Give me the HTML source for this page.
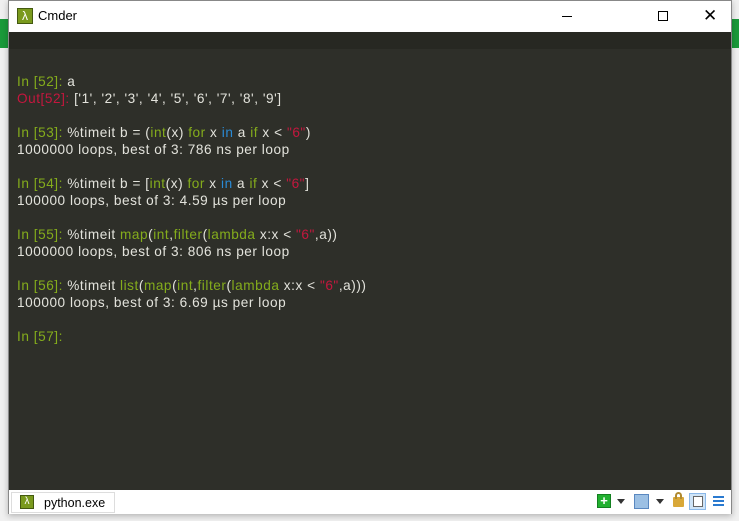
<!DOCTYPE html>
<html><head><meta charset="utf-8"><style>
*{margin:0;padding:0;box-sizing:border-box}
body{width:739px;height:521px;background:#f0f0f0;position:relative;overflow:hidden;font-family:"Liberation Sans","Noto Sans CJK SC",sans-serif}
.bgg{position:absolute;left:0;top:19px;width:8px;height:29px;background:#1a9a3a}
.bgg2{position:absolute;left:731px;top:19px;width:8px;height:29px;background:#1a9a3a}
.win{position:absolute;left:8px;top:0;width:724px;height:514px;background:#fff;border:1px solid #888;box-shadow:0 2px 6px rgba(0,0,0,.25)}
.title{position:absolute;left:0;top:0;width:722px;height:31px;background:#fff}
.logo{position:absolute;left:8px;top:7px;width:16px;height:16px;background:#7a9a1e;border:1px solid #445a10;color:#fff;font-size:12px;line-height:14px;text-align:center}
.tt{position:absolute;left:29px;top:7px;font-size:13px;color:#000}
.con{position:absolute;left:0;top:31px;width:722px;height:458px;background:#2e2f29}
.band{position:absolute;left:0;top:0;width:722px;height:17px;background:#272822}
.l{position:absolute;left:8px;font-size:13.6px;letter-spacing:0.55px;color:#e3e3dc;white-space:pre}
.g{color:#84ac1c}.r{color:#c4173e}.b{color:#2a8bd6}
.sb{position:absolute;left:0;top:489px;width:722px;height:24px;background:#fff}
.tab{position:absolute;left:2px;top:2px;width:104px;height:21px;border:1px solid #ddd;background:#fff}
.tab .logo{left:8px;top:2px;width:14px;height:14px;font-size:10px;line-height:12px}
.tab span{position:absolute;left:32px;top:3px;font-size:12.5px}
</style></head><body>
<div class="bgg"></div><div class="bgg2"></div>
<div class="win">
<div class="title"><div class="logo">λ</div><div class="tt">Cmder</div>
<div style="position:absolute;left:553px;top:15px;width:10px;height:1px;background:#000"></div>
<div style="position:absolute;left:649px;top:10px;width:10px;height:10px;border:1px solid #000"></div>
<div style="position:absolute;left:694px;top:6px;font-size:17px;color:#000;line-height:17px">✕</div>
</div>
<div class="con"><div class="band"></div>
<div class="l" style="top:42px"><span class="g">In [52]: </span>a</div>
<div class="l" style="top:59px"><span class="r">Out[52]: </span>['1', '2', '3', '4', '5', '6', '7', '8', '9']</div>
<div class="l" style="top:93px"><span class="g">In [53]: </span>%timeit b = (<span class="g">int</span>(x) <span class="g">for</span> x <span class="b">in</span> a <span class="g">if</span> x &lt; <span class="r">"6"</span>)</div>
<div class="l" style="top:110px">1000000 loops, best of 3: 786 ns per loop</div>
<div class="l" style="top:144px"><span class="g">In [54]: </span>%timeit b = [<span class="g">int</span>(x) <span class="g">for</span> x <span class="b">in</span> a <span class="g">if</span> x &lt; <span class="r">"6"</span>]</div>
<div class="l" style="top:161px">100000 loops, best of 3: 4.59 µs per loop</div>
<div class="l" style="top:195px"><span class="g">In [55]: </span>%timeit <span class="g">map</span>(<span class="g">int</span>,<span class="g">filter</span>(<span class="g">lambda</span> x:x &lt; <span class="r">"6"</span>,a))</div>
<div class="l" style="top:212px">1000000 loops, best of 3: 806 ns per loop</div>
<div class="l" style="top:246px"><span class="g">In [56]: </span>%timeit <span class="g">list</span>(<span class="g">map</span>(<span class="g">int</span>,<span class="g">filter</span>(<span class="g">lambda</span> x:x &lt; <span class="r">"6"</span>,a)))</div>
<div class="l" style="top:263px">100000 loops, best of 3: 6.69 µs per loop</div>
<div class="l" style="top:297px"><span class="g">In [57]:</span></div>
</div>
<div class="sb"><div class="tab"><div class="logo">λ</div><span>python.exe</span></div>
<div style="position:absolute;left:588px;top:4px;width:14px;height:14px;background:#22b030;border:1px solid #138020;color:#fff;font-size:13px;line-height:12px;text-align:center;font-weight:bold">+</div>
<div style="position:absolute;left:608px;top:9px;border:4px solid transparent;border-top:5px solid #333"></div>
<div style="position:absolute;left:625px;top:4px;width:15px;height:15px;background:#9cc0e4;border:1px solid #5a88c0"></div>
<div style="position:absolute;left:647px;top:9px;border:4px solid transparent;border-top:5px solid #333"></div>
<div style="position:absolute;left:664px;top:7px;width:11px;height:10px;background:#d9a838;border-radius:1px"></div>
<div style="position:absolute;left:666px;top:2px;width:7px;height:7px;border:2px solid #b08a30;border-bottom:none;border-radius:4px 4px 0 0"></div>
<div style="position:absolute;left:680px;top:3px;width:17px;height:17px;background:#cfe4f7;border:1px solid #8bb8e8"><div style="margin:2px 0 0 3px;width:10px;height:11px;border:1px solid #666;background:#fff"></div></div>
<div style="position:absolute;left:704px;top:6px;width:11px;height:2px;background:#2a7ad0;box-shadow:0 4px 0 #2a7ad0,0 8px 0 #2a7ad0"></div>
</div>
</div>
</body></html>
